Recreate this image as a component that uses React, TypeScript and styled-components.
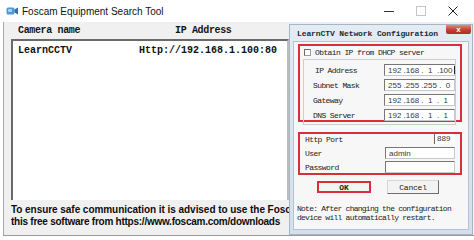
import styled, { createGlobalStyle } from "styled-components";

const GlobalStyle = createGlobalStyle`
  html, body {
    margin: 0;
    padding: 0;
    background: #ffffff;
  }
`;

const Page = styled.div`
  position: relative;
  width: 474px;
  height: 240px;
  overflow: hidden;
  display: flex;
  flex-direction: column;
  background: #ffffff;
`;

const TitleBar = styled.div`
  height: 22px;
  flex-shrink: 0;
  display: flex;
  align-items: center;
  padding-left: 6px;
  font-family: "Liberation Sans", Arial, sans-serif;
  font-size: 10px;
  color: #111;
`;

const TitleText = styled.span`
  margin-left: 3px;
`;

const Controls = styled.div`
  margin-left: auto;
  display: flex;
  padding-right: 5px;
  align-self: stretch;
`;

const Ctrl = styled.div`
  width: 32px;
  display: flex;
  align-items: center;
  justify-content: center;
`;

const Body = styled.div`
  flex: 1;
  margin-left: 3px;
  margin-bottom: 4px;
  border-left: 1px solid #a8a8a8;
  border-bottom: 1px solid #9a9a9a;
  background: #f0f0f0;
  padding-left: 7px;
  display: flex;
  flex-direction: column;
`;

const HeaderRow = styled.div`
  height: 17px;
  display: grid;
  grid-template-columns: 157px auto;
  align-items: center;
  padding-left: 7px;
  font-family: "Liberation Mono", monospace;
  font-weight: bold;
  font-size: 10px;
  letter-spacing: -0.35px;
  color: #151515;
`;

const ListBox = styled.div`
  width: 278px;
  height: 161px;
  box-sizing: border-box;
  background: #ffffff;
  border-top: 2px solid #6a6a6a;
  border-left: 2px solid #6a6a6a;
  border-right: 2px solid #bdbdbd;
  padding: 4px 0 0 5px;
`;

const ListRow = styled.div`
  display: grid;
  grid-template-columns: 121px auto;
  line-height: 12px;
  font-family: "Liberation Mono", monospace;
  font-weight: bold;
  font-size: 10px;
  color: #111;
`;

const Footer = styled.div`
  padding-top: 4px;
  font-family: "Liberation Sans", Arial, sans-serif;
  font-weight: bold;
  font-size: 10px;
  line-height: 12px;
  color: #0d0d0d;
  white-space: nowrap;
  display: flex;
  flex-direction: column;
`;

const FooterLine = styled.span<{ $ls: number }>`
  letter-spacing: ${(p) => p.$ls}px;
`;

/* dialog window floating over the main window */
const Dialog = styled.div`
  position: absolute;
  left: 289px;
  top: 24px;
  width: 184px;
  height: 211px;
  box-sizing: border-box;
  border: 1px solid #a7b6c7;
  background: linear-gradient(#e3ebf3, #d3dfeb);
  padding: 0 3px 4px 3px;
  display: flex;
  flex-direction: column;
`;

const DTitle = styled.div`
  height: 16px;
  flex-shrink: 0;
  display: flex;
  align-items: center;
  padding-left: 4px;
  font-family: "Liberation Mono", monospace;
  font-weight: bold;
  font-size: 8px;
  letter-spacing: -0.1px;
  white-space: nowrap;
  color: #1e2a36;
`;

const CloseBtn = styled.div`
  margin-left: auto;
  margin-right: -2px;
  align-self: flex-start;
  flex-shrink: 0;
  width: 25px;
  height: 9px;
  background: linear-gradient(#e08a7c, #c0402f 55%, #a8301f);
  border-radius: 0 0 2px 2px;
  display: flex;
  align-items: center;
  justify-content: center;
  color: #fff;
  font-family: "Liberation Sans", Arial, sans-serif;
  font-weight: bold;
  font-size: 8px;
  line-height: 8px;
  letter-spacing: 0;
`;

const DBody = styled.div`
  flex: 1;
  background: #f7f7f7;
  border: 1px solid #b6c2cf;
  padding: 2px 0 0 4px;
  display: flex;
  flex-direction: column;
  font-family: "Liberation Mono", monospace;
  font-size: 8px;
  letter-spacing: -0.6px;
  color: #222;
`;

const RedBox = styled.div<{ $h: number; $mt?: number }>`
  width: 164px;
  height: ${(p) => p.$h}px;
  margin-top: ${(p) => p.$mt ?? 0}px;
  box-sizing: border-box;
  border: 2px solid #d92f3c;
  display: flex;
  flex-direction: column;
  flex-shrink: 0;
`;

const CheckRow = styled.div`
  height: 13px;
  flex-shrink: 0;
  display: flex;
  align-items: center;
  padding-left: 4px;
  gap: 4px;
`;

const CheckBox = styled.div`
  width: 7px;
  height: 7px;
  box-sizing: border-box;
  background: #fff;
  border: 1px solid #9a9a9a;
  border-top-color: #6d6d6d;
  border-left-color: #6d6d6d;
`;

const GroupBox = styled.div`
  margin-left: 3px;
  width: 153px;
  height: 66px;
  flex-shrink: 0;
  box-sizing: border-box;
  border: 1px solid #cdcdcd;
  padding-top: 4px;
  display: flex;
  flex-direction: column;
  gap: 3px;
`;

const FieldRow = styled.div<{ $h?: number; $pl?: number }>`
  height: ${(p) => p.$h ?? 12}px;
  display: flex;
  align-items: center;
  padding-left: ${(p) => p.$pl ?? 9}px;
  flex-shrink: 0;
`;

const Label = styled.span<{ $w: number }>`
  width: ${(p) => p.$w}px;
  flex-shrink: 0;
`;

const Field = styled.div<{ $w: number }>`
  width: ${(p) => p.$w}px;
  height: 100%;
  box-sizing: border-box;
  background: #fff;
  border: 1px solid #c8c8c8;
  border-top-color: #767676;
  border-left-color: #767676;
  display: flex;
  align-items: center;
  padding-left: 3px;
  font-family: "Liberation Sans", Arial, sans-serif;
  font-size: 8px;
  letter-spacing: 0;
  color: #3a3a3a;
  white-space: pre;
`;

const Caret = styled.span`
  display: inline-block;
  width: 1px;
  height: 8px;
  background: #222;
  margin-left: 1px;
`;

const PortBox = styled.div`
  margin-left: auto;
  margin-right: 5px;
  margin-top: -2px;
  width: 21px;
  height: 10px;
  box-sizing: border-box;
  border-left: 1px solid #666;
  background: #fff;
  padding-left: 2px;
  font-family: "Liberation Sans", Arial, sans-serif;
  font-size: 8px;
  letter-spacing: 0;
  line-height: 10px;
  color: #3a3a3a;
`;

const PortRows = styled.div`
  display: flex;
  flex-direction: column;
  gap: 2px;
`;

const ButtonRow = styled.div`
  display: flex;
  align-items: center;
  margin-top: 5px;
  padding-left: 19px;
  gap: 16px;
  height: 14px;
`;

const OkOutline = styled.div`
  width: 54px;
  height: 12px;
  box-sizing: border-box;
  border: 2px solid #d92f3c;
  background: #f4f4f4;
  display: flex;
  align-items: center;
  justify-content: center;
  font-weight: bold;
  letter-spacing: 0;
`;

const Button = styled.div`
  width: 52px;
  height: 14px;
  box-sizing: border-box;
  background: #f3f3f3;
  border: 1px solid #d6d6d6;
  border-right-color: #6e6e6e;
  border-bottom-color: #6e6e6e;
  display: flex;
  align-items: center;
  justify-content: center;
  letter-spacing: -0.2px;
`;

const Note = styled.div`
  margin-top: 11px;
  margin-left: -1px;
  line-height: 8.5px;
  letter-spacing: -0.75px;
  color: #1d1d1d;
  white-space: nowrap;
`;

const AppIcon = () => (
  <svg width="13" height="11" viewBox="0 0 13 11">
    <rect x="0.5" y="1.5" width="8" height="7" rx="1.5" fill="#4f97d6" />
    <rect x="2" y="3" width="4" height="3" rx="1" fill="#a9d3f3" />
    <path d="M8.5 3.5 L12 1.5 L12 8.5 L8.5 6.5 Z" fill="#2d6fb0" />
  </svg>
);

export default function App() {
  return (
    <Page>
      <GlobalStyle />
      <TitleBar>
        <AppIcon />
        <TitleText>Foscam Equipment Search Tool</TitleText>
        <Controls>
          <Ctrl>
            <svg width="10" height="10" viewBox="0 0 10 10">
              <line x1="0" y1="5.5" x2="10" y2="5.5" stroke="#333" strokeWidth="1" />
            </svg>
          </Ctrl>
          <Ctrl>
            <svg width="10" height="10" viewBox="0 0 10 10">
              <rect x="0.5" y="0.5" width="9" height="9" fill="none" stroke="#c4c4c4" />
            </svg>
          </Ctrl>
          <Ctrl>
            <svg width="10" height="10" viewBox="0 0 10 10">
              <path d="M0.5 0.5 L9.5 9.5 M9.5 0.5 L0.5 9.5" stroke="#222" strokeWidth="1" />
            </svg>
          </Ctrl>
        </Controls>
      </TitleBar>

      <Body>
        <HeaderRow>
          <span>Camera name</span>
          <span>IP Address</span>
        </HeaderRow>
        <ListBox>
          <ListRow>
            <span>LearnCCTV</span>
            <span>Http://192.168.1.100:80</span>
          </ListRow>
        </ListBox>
        <Footer>
          <FooterLine $ls={-0.05}>
            To ensure safe communication it is advised to use the Foscam
          </FooterLine>
          <FooterLine $ls={-0.25}>
            this free software from https://www.foscam.com/downloads
          </FooterLine>
        </Footer>
      </Body>

      <Dialog>
        <DTitle>
          LearnCTV Network Configuration
          <CloseBtn>x</CloseBtn>
        </DTitle>
        <DBody>
          <RedBox $h={78}>
            <CheckRow>
              <CheckBox />
              <span>Obtain IP from DHCP server</span>
            </CheckRow>
            <GroupBox>
              <FieldRow $pl={11}>
                <Label $w={69}>IP Address</Label>
                <Field $w={71}>
                  192 .168 .  1  .100<Caret />
                </Field>
              </FieldRow>
              <FieldRow>
                <Label $w={71}>Subnet Mask</Label>
                <Field $w={71}>255 .255 .255 .  0</Field>
              </FieldRow>
              <FieldRow>
                <Label $w={71}>Gateway</Label>
                <Field $w={71}>192 .168 .  1  .  1</Field>
              </FieldRow>
              <FieldRow>
                <Label $w={71}>DNS Server</Label>
                <Field $w={71}>192 .168 .  1  .  1</Field>
              </FieldRow>
            </GroupBox>
          </RedBox>

          <RedBox $h={43} $mt={10}>
            <PortRows>
              <FieldRow $h={11} $pl={5}>
                <Label $w={80}>Http Port</Label>
                <PortBox>889</PortBox>
              </FieldRow>
              <FieldRow $pl={5}>
                <Label $w={80}>User</Label>
                <Field $w={70}>admin</Field>
              </FieldRow>
              <FieldRow $pl={5}>
                <Label $w={80}>Password</Label>
                <Field $w={70} />
              </FieldRow>
            </PortRows>
          </RedBox>

          <ButtonRow>
            <OkOutline>OK</OkOutline>
            <Button>Cancel</Button>
          </ButtonRow>

          <Note>
            Note: After changing the configuration
            <br />
            device will automatically restart.
          </Note>
        </DBody>
      </Dialog>
    </Page>
  );
}
